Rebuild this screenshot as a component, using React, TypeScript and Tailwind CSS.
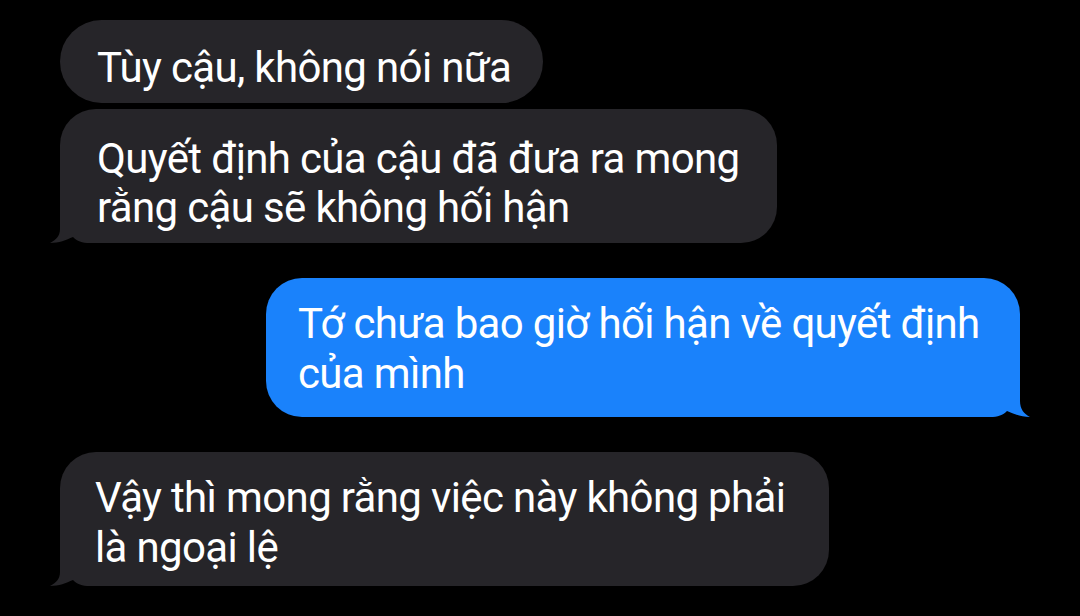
import React from "react";

const GRAY = "#262529";
const BLUE = "#1a82fb";

function TailLeft({ color }: { color: string }) {
  return (
    <svg
      className="absolute left-[-10px] bottom-0"
      width="50"
      height="40"
      viewBox="0 0 50 40"
    >
      <path
        d="M10,0 L10,26 C10,33 6,37 0,40 C9,40 16,37 23,34 C27,38 32,40 40,40 L50,40 L50,0 Z"
        fill={color}
      />
    </svg>
  );
}

function TailRight({ color }: { color: string }) {
  return (
    <svg
      className="absolute right-[-10px] bottom-0"
      width="50"
      height="40"
      viewBox="0 0 50 40"
    >
      <path
        d="M40,0 L40,24 C40,32 44,37 50,40 C41,40 34,37 27,34 C23,38 18,40 10,40 L0,40 L0,0 Z"
        fill={color}
      />
    </svg>
  );
}

export default function App() {
  return (
    <div
      className="w-[1080px] h-[616px] bg-black overflow-hidden flex flex-col pt-[20px] text-white text-[42px] leading-[49px] tracking-[-0.65px]"
      style={{ fontFamily: "Roboto, 'Noto Sans', sans-serif" }}
    >
      <div
        className="ml-[60px] w-[483px] h-[83px] rounded-[42px] pl-[37px] pt-[23px] whitespace-nowrap"
        style={{ backgroundColor: GRAY }}
      >
        Tùy cậu, không nói nữa
      </div>

      <div
        className="relative ml-[60px] mt-[6px] w-[717px] h-[134px] rounded-[36px] pl-[37px] pt-[25px] whitespace-nowrap"
        style={{ backgroundColor: GRAY }}
      >
        <TailLeft color={GRAY} />
        <div className="relative">
          Quyết định của cậu đã đưa ra mong
          <br />
          rằng cậu sẽ không hối hận
        </div>
      </div>

      <div
        className="relative self-end mr-[60px] mt-[35px] w-[754px] h-[139px] rounded-[36px] pl-[32px] pt-[21px] leading-[50px] whitespace-nowrap"
        style={{ backgroundColor: BLUE }}
      >
        <TailRight color={BLUE} />
        <div className="relative">
          Tớ chưa bao giờ hối hận về quyết định
          <br />
          của mình
        </div>
      </div>

      <div
        className="relative ml-[60px] mt-[35px] w-[769px] h-[134px] rounded-[36px] pl-[35px] pt-[21px] leading-[50px] whitespace-nowrap"
        style={{ backgroundColor: GRAY }}
      >
        <TailLeft color={GRAY} />
        <div className="relative">
          Vậy thì mong rằng việc này không phải
          <br />
          là ngoại lệ
        </div>
      </div>
    </div>
  );
}
